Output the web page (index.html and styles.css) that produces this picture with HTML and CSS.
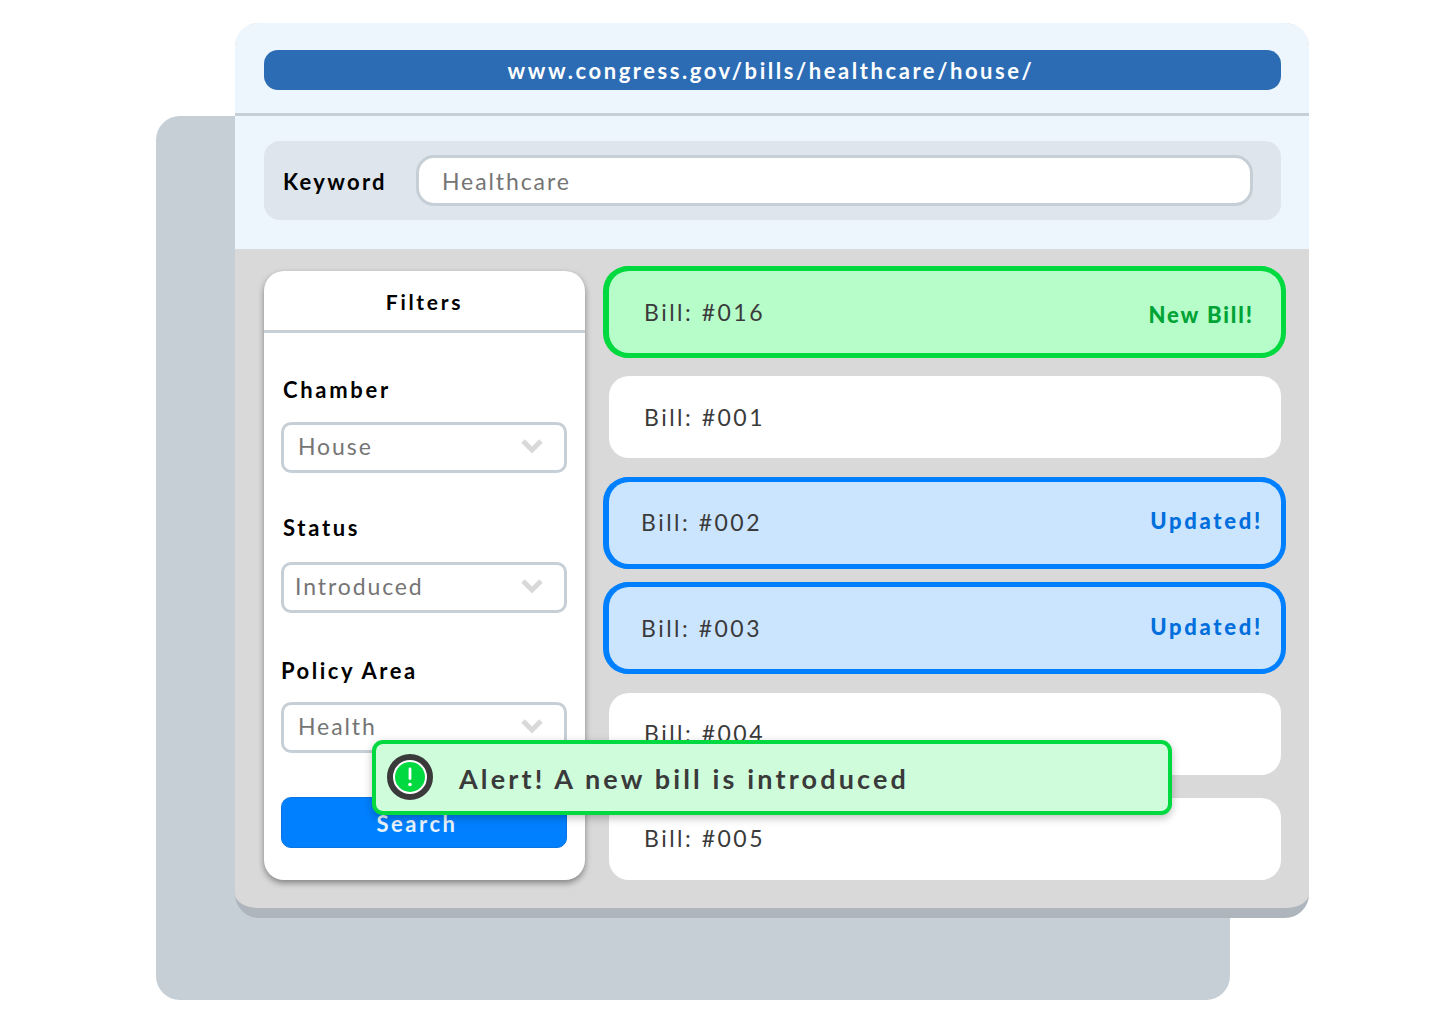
FILE: index.html
```html
<!DOCTYPE html>
<html lang="en">
<head>
<meta charset="utf-8">
<title>Congress bills</title>
<link rel="stylesheet" href="styles.css">
</head>
<body>
<div class="stage">
  <div class="backdrop"></div>
  <main class="window">
    <header class="address">
      <div class="url">www.congress.gov/bills/healthcare/house/</div>
    </header>
    <section class="keyword-band">
      <div class="keyword">
        <span class="keyword-label">Keyword</span>
        <div class="keyword-input">Healthcare</div>
      </div>
    </section>
    <section class="content">
      <aside class="filters">
        <h2 class="filters-title">Filters</h2>
        <div class="filters-body">
          <div class="field field-chamber">
            <div class="field-label">Chamber</div>
            <div class="select"><span>House</span>
              <svg class="chev" viewBox="0 0 24 16"><path d="M3 3l9 9 9-9"/></svg></div>
          </div>
          <div class="field field-status">
            <div class="field-label">Status</div>
            <div class="select select-tight"><span>Introduced</span>
              <svg class="chev" viewBox="0 0 24 16"><path d="M3 3l9 9 9-9"/></svg></div>
          </div>
          <div class="field field-policy">
            <div class="field-label field-label-tight">Policy Area</div>
            <div class="select"><span>Health</span>
              <svg class="chev" viewBox="0 0 24 16"><path d="M3 3l9 9 9-9"/></svg></div>
          </div>
          <div class="search">Search</div>
        </div>
      </aside>
      <div class="bills">
        <div class="bill bill-new"><span class="bill-name">Bill: #016</span><span class="tag tag-new">New Bill!</span></div>
        <div class="bill"><span class="bill-name">Bill: #001</span></div>
        <div class="bill bill-upd"><span class="bill-name">Bill: #002</span><span class="tag tag-upd">Updated!</span></div>
        <div class="bill bill-upd"><span class="bill-name">Bill: #003</span><span class="tag tag-upd">Updated!</span></div>
        <div class="bill"><span class="bill-name">Bill: #004</span></div>
        <div class="bill"><span class="bill-name">Bill: #005</span></div>
      </div>
    </section>
  </main>
  <div class="toast">
    <svg class="toast-icon" viewBox="0 0 46 46">
      <circle cx="23" cy="23" r="20" fill="#fff" stroke="#3a3a3a" stroke-width="6"/>
      <circle cx="23" cy="23" r="15" fill="#00d93f"/>
      <rect x="21.6" y="13.5" width="2.8" height="12.5" rx="1.4" fill="#fff"/>
      <circle cx="23" cy="30.5" r="1.8" fill="#fff"/>
    </svg>
    <span class="toast-text">Alert! A new bill is introduced</span>
  </div>
</div>
</body>
</html>
```
FILE: styles.css
```css
* { box-sizing: border-box; }
html, body { margin: 0; background: #fff; }
body { font-family: "Lato", "Open Sans", sans-serif; }
.stage { position: relative; width: 1440px; height: 1024px; overflow: hidden; padding: 23px 0 0 235px; }
.backdrop { position: absolute; left: 156px; top: 116px; width: 1074px; height: 884px; border-radius: 24px; background: #c7cfd6; }
.window { position: relative; width: 1074px; height: 895px; border-radius: 24px; overflow: hidden; background: #d9d9d9; border-bottom: 10px solid #aeb5bd; display: flex; flex-direction: column; }
.address { height: 93px; flex: none; padding: 27px 28px 0 29px; background: #eef6fd; border-bottom: 3px solid #c7cfd6; }
.url { height: 40px; border-radius: 14px; background: #2c6cb5; color: #fff; text-align: center; font-size: 22px; font-weight: 700; line-height: 41px; letter-spacing: 2.55px; padding-right: 3px; }
.keyword-band { height: 133px; flex: none; padding: 25px 28px 0 29px; background: #eef6fd; }
.keyword { height: 79px; border-radius: 16px; background: #dee5ec; display: flex; align-items: center; padding: 0 28px 0 19px; }
.keyword-label { width: 133px; flex: none; padding-top: 2px; font-size: 22px; font-weight: 700; letter-spacing: 2.3px; color: #000; }
.keyword-input { flex: 1; height: 51px; border: 3px solid #c7cfd6; border-radius: 18px; background: #fff; padding-left: 23px; line-height: 47px; font-size: 23px; letter-spacing: 1.9px; color: #757575; }
.content { flex: 1; display: flex; padding: 22px 28px 0 29px; gap: 24px; }
.filters { width: 321px; height: 609px; flex: none; border-radius: 20px; background: #fff; box-shadow: 0 3px 6px rgba(0,0,0,.4); display: flex; flex-direction: column; }
.filters-title { margin: 0; height: 62px; border-bottom: 3px solid #c7cfd6; text-align: center; font-size: 21px; font-weight: 700; line-height: 62px; letter-spacing: 2.7px; color: #000; }
.filters-body { padding: 0 18px 0 17px; }
.field-label { font-size: 22px; font-weight: 700; letter-spacing: 2.7px; color: #000; height: 28px; line-height: 28px; padding-left: 2px; }
.field-label-tight { padding-left: 0; letter-spacing: 2.5px; }
.field-chamber { padding-top: 43px; }
.field-status { padding-top: 41px; }
.field-policy { padding-top: 44px; }
.select { margin-top: 18px; height: 51px; border: 3px solid #c7cfd6; border-radius: 10px; background: #fff; display: flex; align-items: center; justify-content: space-between; padding: 0 20px 3px 14px; font-size: 23px; letter-spacing: 1.9px; color: #757575; }
.field-status .select { margin-top: 20px; }
.field-policy .select { margin-top: 17px; }
.select-tight { padding-left: 11px; }
.chev { width: 24px; height: 16px; fill: none; stroke: #d9d9d9; stroke-width: 5; }
.search { margin-top: 44px; height: 51px; border-radius: 10px; background: #0080ff; border: 1px solid #0a74e0; color: #e8f2fc; font-size: 22px; font-weight: 700; letter-spacing: 2.5px; text-align: center; padding: 12px 14px 0 0; line-height: 28px; }
.bills { flex: 1; display: flex; flex-direction: column; gap: 23.4px; }
.bill { height: 82px; border-radius: 20px; background: #fff; display: flex; align-items: center; justify-content: space-between; padding: 0 27px 0 35px; font-size: 23px; letter-spacing: 2.5px; color: #3a3a3a; flex: none; }
.bill-name { padding-bottom: 1px; }
.bill-new { background: #b6fdc9; box-shadow: 0 0 0 5px #00d93f, -1px 0 0 5px #00d93f; }
.bill-upd { background: #cce5ff; box-shadow: 0 0 0 5px #0080ff, -1px 0 0 5px #0080ff; padding: 0 18px 0 32px; }
.tag { font-weight: 900; font-size: 22px; letter-spacing: 1.9px; }
.tag-new { color: #00a336; padding-top: 5px; }
.tag-upd { color: #006fdc; padding-bottom: 4px; letter-spacing: 2.7px; }
.toast { position: absolute; left: 372px; top: 740px; width: 800px; height: 75px; border: 4px solid #00d93f; border-radius: 11px; background: #cffddc; box-shadow: 0 3px 8px rgba(0,0,0,.25); display: flex; align-items: center; padding-left: 11px; }
.toast-icon { width: 46px; height: 46px; flex: none; margin-top: -1px; }
.toast-text { margin-left: 26px; padding-top: 2px; font-size: 27px; font-weight: 700; letter-spacing: 3.15px; color: #3a3a3a; }
```
